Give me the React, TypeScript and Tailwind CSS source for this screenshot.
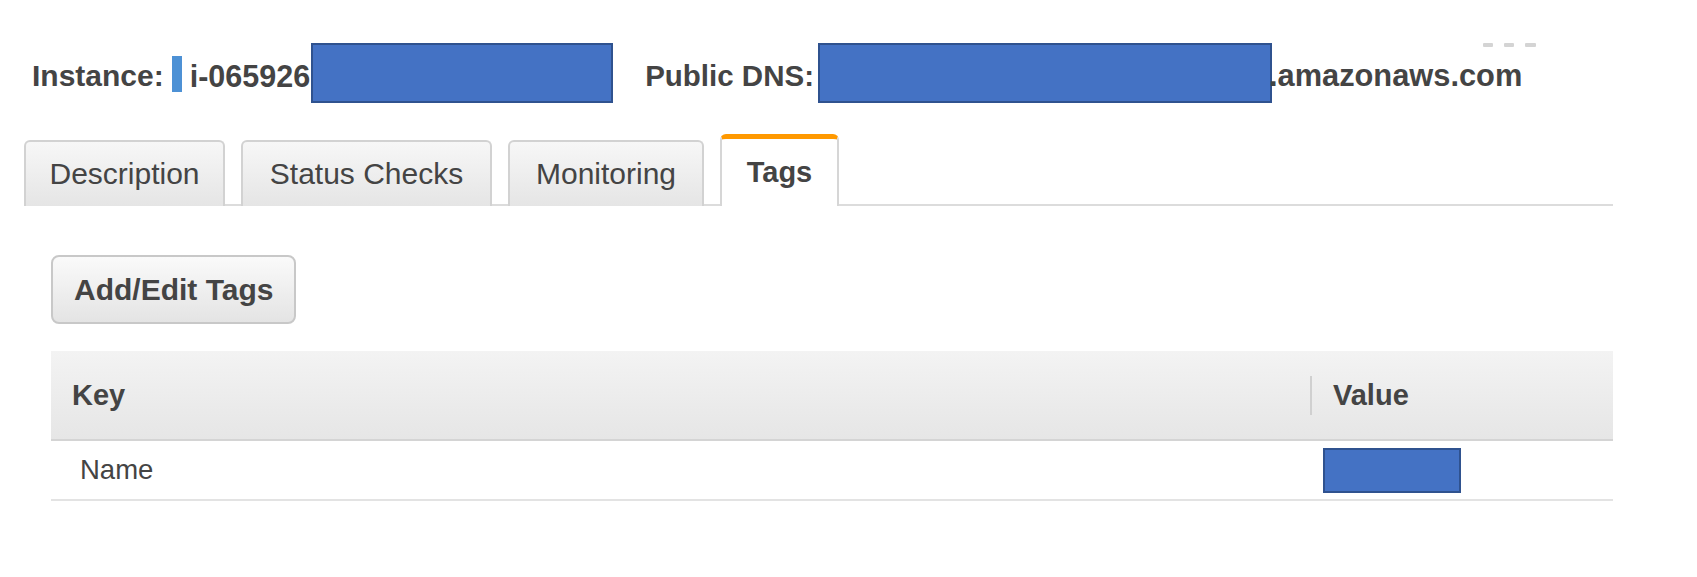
import React from "react";

const BlueBox = ({ className }: { className: string }) => (
  <div className={"bg-[#4472c4] border-2 border-[#2f528f] " + className} />
);

export default function App() {
  return (
    <div className="relative w-[1697px] h-[577px] bg-white text-[#444] font-['Liberation_Sans','Helvetica_Neue',Arial,sans-serif] overflow-hidden">
      {/* window dashes */}
      <div className="absolute left-[1483px] top-[43px] flex gap-[11px]">
        <div className="w-[10px] h-[4px] bg-[#d4d4d4] rounded-[1px]" />
        <div className="w-[10px] h-[4px] bg-[#d4d4d4] rounded-[1px]" />
        <div className="w-[11px] h-[4px] bg-[#d4d4d4] rounded-[1px]" />
      </div>

      <div className="pl-[24px] pt-[43px]">
        {/* header row */}
        <div className="flex items-center h-[60px] pl-[8px] text-[30px] leading-[30px] font-bold">
          <span className="pt-[6px]">Instance:</span>
          <div className="ml-[8px] mt-[2px] w-[10px] h-[36px] bg-[#4d91d5]" />
          <span className="ml-[8px] pt-[6px] text-[30.5px]">i-065926</span>
          <BlueBox className="ml-[1px] w-[302px] h-[60px]" />
          <span className="ml-[32px] pt-[6px] text-[29.5px]">Public DNS:</span>
          <BlueBox className="ml-[4px] w-[454px] h-[60px]" />
          <span className="-ml-[3px] pt-[6px] text-[30.8px]">.amazonaws.com</span>
        </div>

        {/* tabs */}
        <div className="mt-[31px] w-[1589px] flex items-end gap-[16px] border-b-2 border-[#dcdcdc] h-[72px]">
          <div className="w-[201px] h-[66px] -mb-[2px] flex items-center justify-center rounded-t-[6px] border-2 border-b-0 border-[#d2d2d2] bg-gradient-to-b from-[#f7f7f7] to-[#e5e5e5] text-[30px] leading-[30px]">
            Description
          </div>
          <div className="w-[251px] h-[66px] -mb-[2px] flex items-center justify-center rounded-t-[6px] border-2 border-b-0 border-[#d2d2d2] bg-gradient-to-b from-[#f7f7f7] to-[#e5e5e5] text-[30px] leading-[30px]">
            Status Checks
          </div>
          <div className="w-[196px] h-[66px] -mb-[2px] flex items-center justify-center rounded-t-[6px] border-2 border-b-0 border-[#d2d2d2] bg-gradient-to-b from-[#f7f7f7] to-[#e5e5e5] text-[30px] leading-[30px]">
            Monitoring
          </div>
          <div className="w-[119px] h-[72px] -mb-[2px] flex items-center justify-center rounded-t-[6px] border-2 border-t-[5px] border-b-0 border-[#d6d6d6] border-t-[#ff9900] bg-white text-[29px] leading-[30px] font-bold pb-[2px]">
            Tags
          </div>
        </div>

        {/* content */}
        <div className="pl-[27px] pt-[49px]">
          <button className="h-[69px] px-[21px] rounded-[8px] border-2 border-[#c8c8c8] bg-gradient-to-b from-[#fafafa] to-[#e4e4e4] text-[30px] leading-[30px] font-bold text-[#444]">
            Add/Edit Tags
          </button>

          <div className="mt-[27px] w-[1562px]">
            <div className="grid grid-cols-[1259px_1fr] h-[90px] bg-gradient-to-b from-[#f3f3f3] to-[#e6e6e6] border-b-2 border-[#d4d4d4] text-[29px] leading-[30px] font-bold">
              <div className="flex items-center pl-[21px]">Key</div>
              <div className="flex items-center">
                <div className="w-[2px] h-[39px] bg-[#d0d0d0]" />
                <span className="ml-[21px]">Value</span>
              </div>
            </div>
            <div className="grid grid-cols-[1259px_1fr] h-[60px] border-b-2 border-[#e3e3e3] text-[27.5px] leading-[28px]">
              <div className="flex items-center pl-[29px]">Name</div>
              <div className="flex items-center">
                <BlueBox className="ml-[13px] w-[138px] h-[45px]" />
              </div>
            </div>
          </div>
        </div>
      </div>
    </div>
  );
}
